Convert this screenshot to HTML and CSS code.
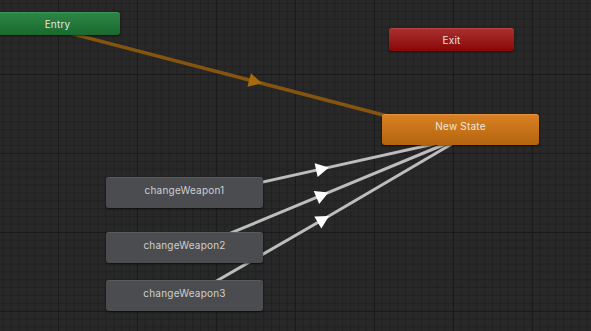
FILE: index.html
```html
<!DOCTYPE html>
<html>
<head lang="en">
    <meta charset="UTF-8">
    <title>Animator</title>
    <link rel="stylesheet" href="styles.css">
</head>
<body>
<div id="graph">
    <svg id="links" width="591" height="331" viewBox="0 0 591 331">
        <defs>
            <marker id="arrowOrange" markerUnits="userSpaceOnUse" markerWidth="16" markerHeight="16" viewBox="-8 -8 16 16" orient="auto">
                <path d="M-6,-7 L7,0 L-6,7 z" fill="#a86b0c"/>
            </marker>
            <marker id="arrowWhite" markerUnits="userSpaceOnUse" markerWidth="16" markerHeight="16" viewBox="-8 -8 16 16" orient="auto">
                <path d="M-6,-7 L7,0 L-6,7 z" fill="#ffffff"/>
            </marker>
        </defs>
        <polyline class="link orange" points="60,30.6 255,81.5 460,135" marker-mid="url(#arrowOrange)"/>
        <polyline class="link white" points="184,199.5 322,168.9 452,140" marker-mid="url(#arrowWhite)"/>
        <polyline class="link white" points="184,252.3 322,195.2 455,140" marker-mid="url(#arrowWhite)"/>
        <polyline class="link white" points="184,299.8 323,219.5 458.5,140" marker-mid="url(#arrowWhite)"/>
    </svg>

    <div class="node small entry" style="left:-5px;top:12px">Entry</div>
    <div class="node small exit" style="left:389px;top:28px">Exit</div>
    <div class="node state default" style="left:382px;top:114px">New State</div>
    <div class="node state" style="left:106px;top:177px">changeWeapon1</div>
    <div class="node state" style="left:106px;top:232px">changeWeapon2</div>
    <div class="node state" style="left:106px;top:280px">changeWeapon3</div>
</div>
</body>
</html>
```

FILE: styles.css
```css
*{
    margin: 0;
    padding: 0;
    box-sizing: border-box;
}
body{
    background: #282828;
    font-family: Inter, "Noto Sans", sans-serif;
}
#graph{
    width: 591px;
    height: 331px;
    position: relative;
    overflow: hidden;
    background-color: #282828;
    background-image:
        linear-gradient(90deg, #1b1b1b 1px, transparent 1px),
        linear-gradient(#1b1b1b 1px, transparent 1px),
        linear-gradient(90deg, #212121 1px, transparent 1px),
        linear-gradient(#212121 1px, transparent 1px);
    background-size: 79px 79px, 79px 79px, 7.9px 7.9px, 7.9px 7.9px;
    background-position: 58px 74px, 58px 74px, 58px 74px, 58px 74px;
}
#links{
    position: absolute;
    left: 0;
    top: 0;
}
.link{
    fill: none;
    stroke-width: 3;
}
.link.orange{
    stroke: #855510;
    stroke-width: 3.5;
}
.link.white{
    stroke: #bdbdbd;
}
.node{
    position: absolute;
    display: flex;
    align-items: center;
    justify-content: center;
    font-size: 10px;
    letter-spacing: 0.2px;
    border-radius: 3px;
    box-shadow: 0 1px 2px rgba(0,0,0,0.6);
}
.node.small{
    width: 125px;
    height: 23px;
    color: #e4e4e4;
}
.node.state{
    width: 157px;
    height: 31px;
    padding-bottom: 6px;
    color: #cfcfcf;
    background: #4a4c50;
    border-top: 1px solid #585a5e;
}
.entry{
    background: linear-gradient(#2c8645, #1b692f);
    border-top: 1px solid #3c9655;
}
.exit{
    background: linear-gradient(#a9302f, #8a0606);
    border-top: 1px solid #b84443;
}
.node.state.default{
    color: #f0e6dc;
    padding-bottom: 8px;
    background: linear-gradient(#d98123, #b3640f);
    border-top: 1px solid #e69340;
}
```
